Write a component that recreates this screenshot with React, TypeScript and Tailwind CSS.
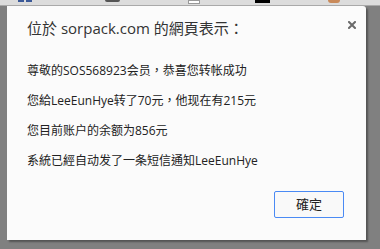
import React from "react";

const font = { fontFamily: '"Open Sans", "Noto Sans CJK TC", "Noto Sans CJK SC", sans-serif' };

export default function App() {
  const lines = [
    "尊敬的SOS568923会员，恭喜您转帐成功",
    "您給LeeEunHye转了70元，他现在有215元",
    "您目前账户的余额为856元",
    "系統已經自动发了一条短信通知LeeEunHye",
  ];
  return (
    <div className="w-[380px] h-[249px] bg-[#808080] flex flex-col overflow-hidden" style={font}>
      <div className="relative h-[6px] shrink-0 bg-[#dcdcdc] border-b border-[#a9a9a9]">
        <div className="absolute left-[18px] top-0 w-[6px] h-[2px] bg-[#3b5998]" />
        <div className="absolute left-[26px] top-0 w-[6px] h-[2px] bg-[#3b5998]" />
        <div className="absolute left-[105px] top-0 w-[15px] h-[2px] rounded-b bg-[#555]" />
        <div className="absolute left-[188px] top-0 w-[12px] h-[4px] bg-white border border-[#999]" />
        <div className="absolute left-[255px] top-0 w-[15px] h-[3px] bg-black" />
        <div className="absolute left-[328px] top-0 w-[12px] h-[3px] rounded-b-full bg-[#c98a5a]" />
      </div>
      <div className="ml-[7px] w-[359px] h-[234px] bg-[#fbfbfb] rounded-tr-[3px] shadow-[2px_2px_2px_rgba(0,0,0,0.35)] flex flex-col">
        <div className="flex items-start justify-between pt-[10px] pl-[20px] pr-[10px]">
          <div className="text-[15px] leading-[24px] text-[#333]">位於 sorpack.com 的網頁表示：</div>
          <svg width="8" height="8" viewBox="0 0 8 8" className="mt-[5px] mr-[0px]">
            <path d="M1 1 L7 7 M7 1 L1 7" stroke="#6a6a6a" strokeWidth="2" strokeLinecap="square" />
          </svg>
        </div>
        <div className="mt-[16px] pl-[20px] flex flex-col">
          {lines.map((l, i) => (
            <div key={i} className="h-[30px] flex items-center text-[12px] text-[#222]">{l}</div>
          ))}
        </div>
        <div className="mt-[15px] pr-[22px] flex justify-end">
          <div className="w-[70px] h-[27px] border border-[#4a8af4] rounded-[2px] bg-[#f9f9f9] flex items-center justify-center text-[13px] text-[#222]">確定</div>
        </div>
      </div>
    </div>
  );
}
